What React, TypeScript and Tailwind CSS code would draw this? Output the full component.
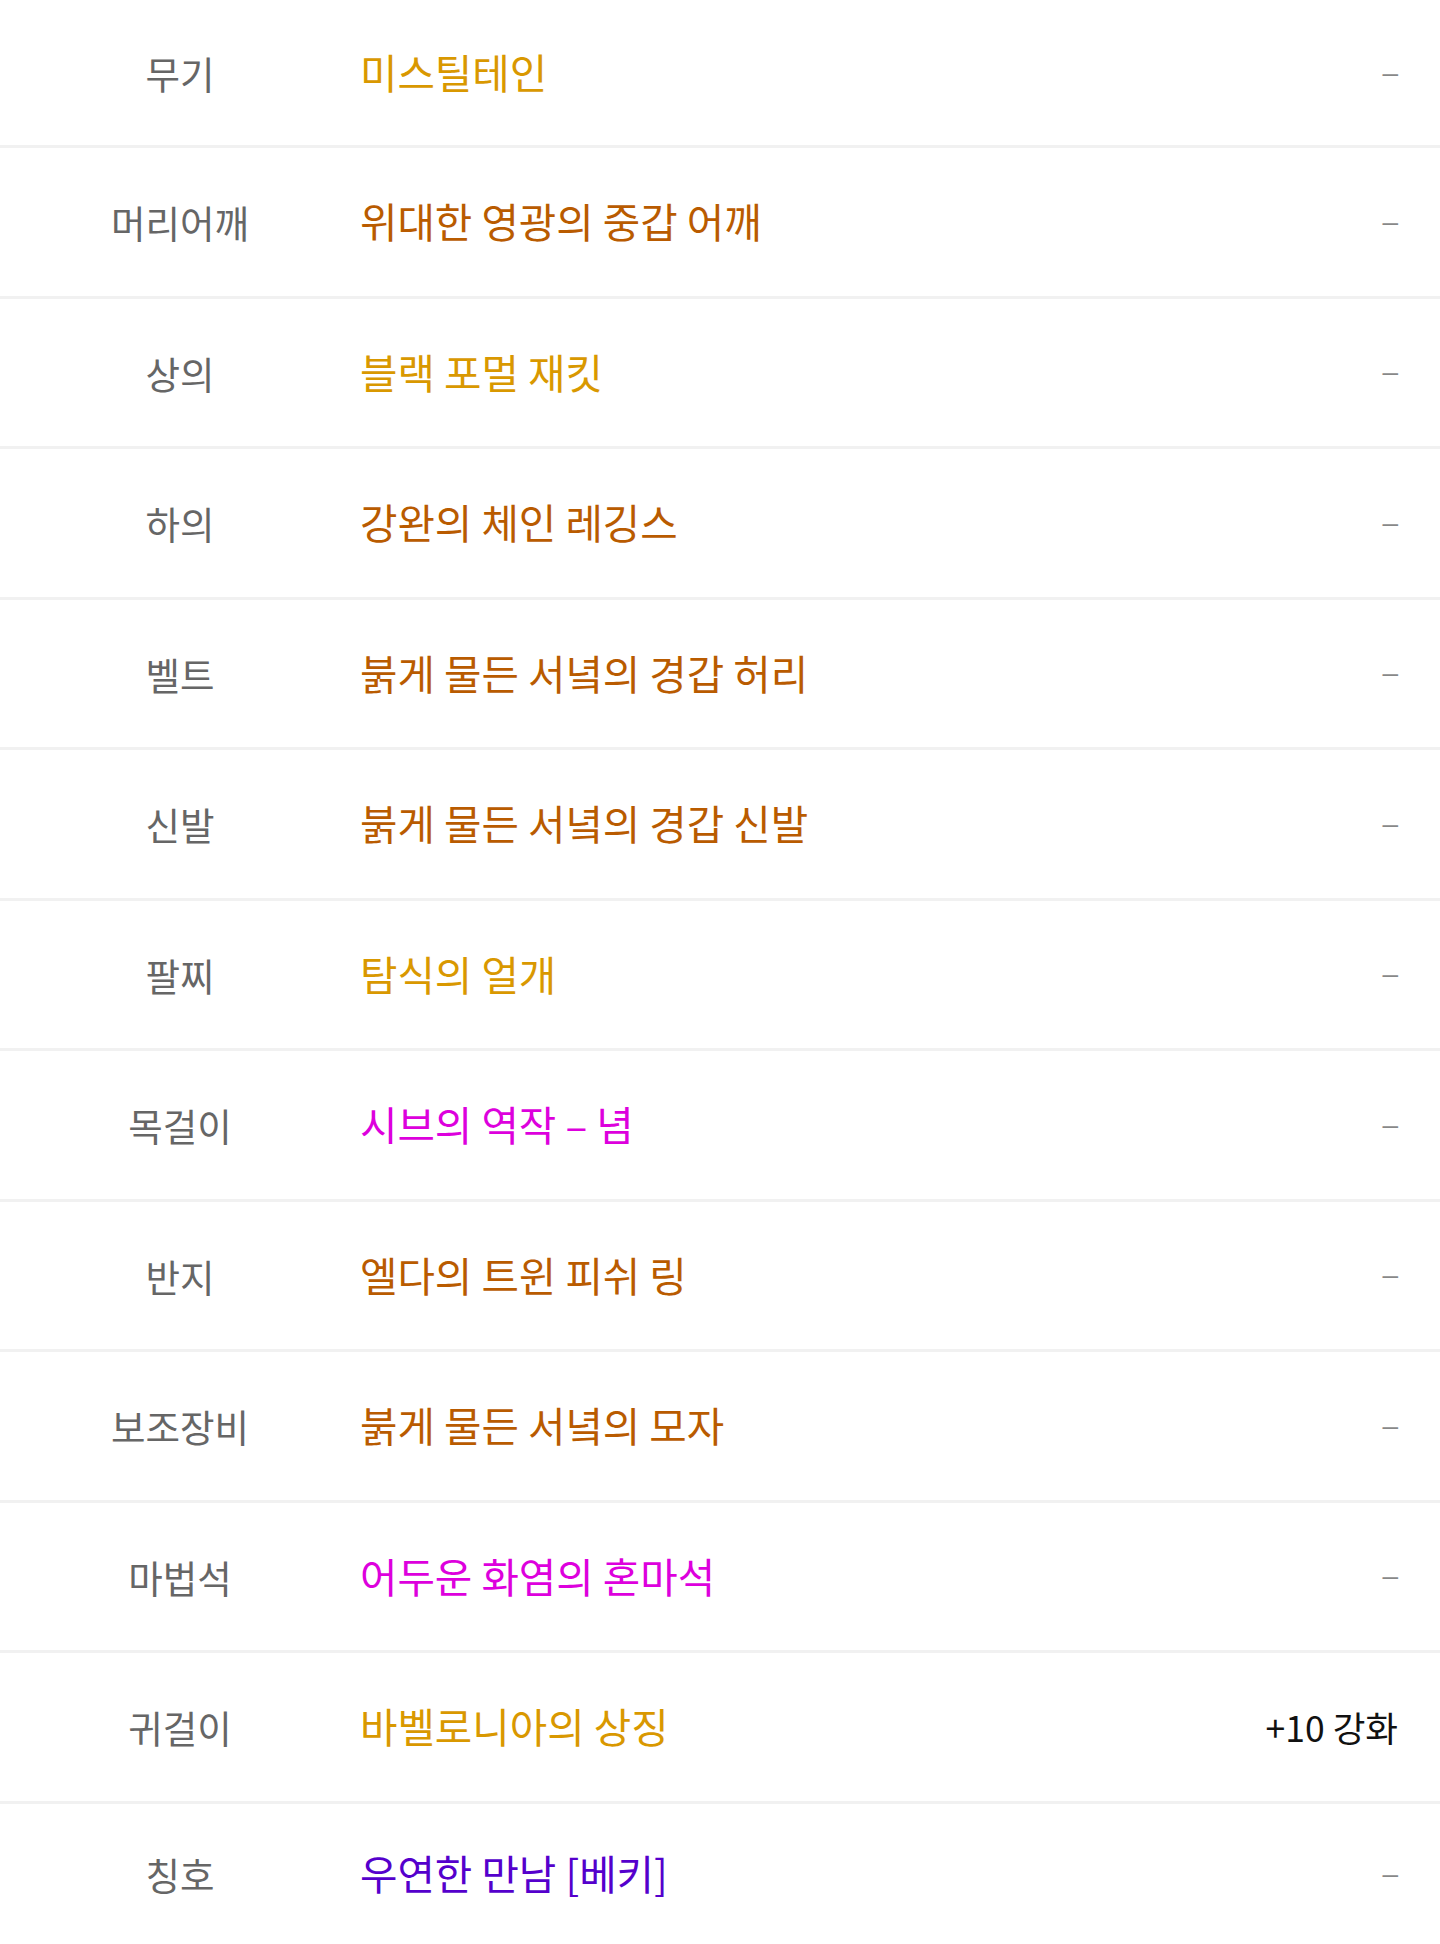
import React from 'react'

type Row = {
  slot: string
  name: string
  color: string
  extra?: string
}

const rows: Row[] = [
  { slot: '무기', name: '미스틸테인', color: 'text-[#d99800]' },
  { slot: '머리어깨', name: '위대한 영광의 중갑 어깨', color: 'text-[#b95b00]' },
  { slot: '상의', name: '블랙 포멀 재킷', color: 'text-[#d99800]' },
  { slot: '하의', name: '강완의 체인 레깅스', color: 'text-[#b95b00]' },
  { slot: '벨트', name: '붉게 물든 서녘의 경갑 허리', color: 'text-[#b95b00]' },
  { slot: '신발', name: '붉게 물든 서녘의 경갑 신발', color: 'text-[#b95b00]' },
  { slot: '팔찌', name: '탐식의 얼개', color: 'text-[#d99800]' },
  { slot: '목걸이', name: '시브의 역작 – 념', color: 'text-[#dd00dd]' },
  { slot: '반지', name: '엘다의 트윈 피쉬 링', color: 'text-[#b95b00]' },
  { slot: '보조장비', name: '붉게 물든 서녘의 모자', color: 'text-[#b95b00]' },
  { slot: '마법석', name: '어두운 화염의 혼마석', color: 'text-[#dd00dd]' },
  { slot: '귀걸이', name: '바벨로니아의 상징', color: 'text-[#d99800]', extra: '+10 강화' },
  { slot: '칭호', name: '우연한 만남 [베키]', color: 'text-[#5500cc]' },
]

function EquipRow({ row, first, last }: { row: Row; first: boolean; last: boolean }) {
  const height = first ? 'h-[148px]' : last ? 'h-[140.5px]' : 'h-[150.5px]'
  return (
    <div
      className={`flex flex-row items-center ${height} ${last ? '' : 'border-b-[3px] border-[#f1f1f1]'}`}
    >
      <div className="w-[360px] shrink-0 text-center text-[37.5px] leading-none text-[#666666] whitespace-nowrap">
        {row.slot}
      </div>
      <div className={`flex-1 min-w-0 text-[40.7px] leading-none ${row.color} whitespace-nowrap`}>
        {row.name}
      </div>
      <div className="pr-[42px] flex justify-end">
        {row.extra ? (
          <span className="text-[35.5px] leading-none text-[#111111] whitespace-nowrap">
            {row.extra}
          </span>
        ) : (
          <span className="font-['Liberation_Sans',sans-serif] text-[28px] leading-none text-[#888888]">
            –
          </span>
        )}
      </div>
    </div>
  )
}

export default function App() {
  return (
    <div className="w-[1440px] bg-white font-['Noto_Sans_CJK_KR','Noto_Sans',sans-serif]">
      {rows.map((row, i) => (
        <EquipRow key={row.slot} row={row} first={i === 0} last={i === rows.length - 1} />
      ))}
    </div>
  )
}
